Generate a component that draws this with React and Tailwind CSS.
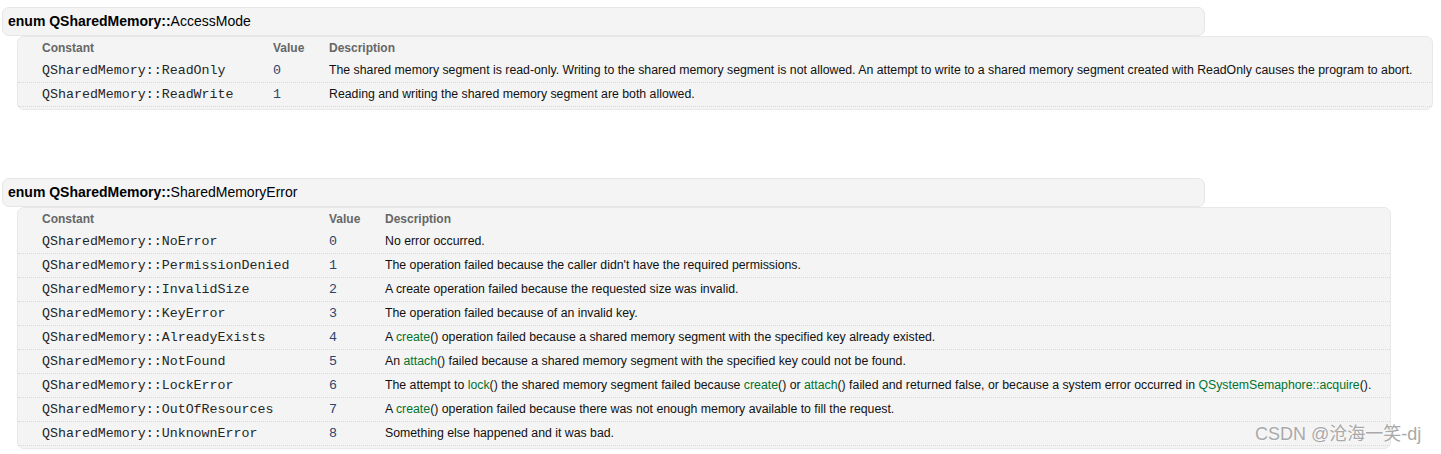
import React from 'react';

const G = ({ children }) => <span className="text-[#00732f]">{children}</span>;

const accessMode = {
    name: 'AccessMode',
    col1: 'w-[255px]',
    rows: [
        ['QSharedMemory::ReadOnly', '0', 'The shared memory segment is read-only. Writing to the shared memory segment is not allowed. An attempt to write to a shared memory segment created with ReadOnly causes the program to abort.'],
        ['QSharedMemory::ReadWrite', '1', 'Reading and writing the shared memory segment are both allowed.'],
    ],
};

const sharedError = {
    name: 'SharedMemoryError',
    col1: 'w-[311px]',
    rows: [
        ['QSharedMemory::NoError', '0', 'No error occurred.'],
        ['QSharedMemory::PermissionDenied', '1', "The operation failed because the caller didn't have the required permissions."],
        ['QSharedMemory::InvalidSize', '2', 'A create operation failed because the requested size was invalid.'],
        ['QSharedMemory::KeyError', '3', 'The operation failed because of an invalid key.'],
        ['QSharedMemory::AlreadyExists', '4', <>A <G>create</G>() operation failed because a shared memory segment with the specified key already existed.</>],
        ['QSharedMemory::NotFound', '5', <>An <G>attach</G>() failed because a shared memory segment with the specified key could not be found.</>],
        ['QSharedMemory::LockError', '6', <>The attempt to <G>lock</G>() the shared memory segment failed because <G>create</G>() or <G>attach</G>() failed and returned false, or because a system error occurred in <G>QSystemSemaphore::acquire</G>().</>],
        ['QSharedMemory::OutOfResources', '7', <>A <G>create</G>() operation failed because there was not enough memory available to fill the request.</>],
        ['QSharedMemory::UnknownError', '8', 'Something else happened and it was bad.'],
    ],
};

const EnumBlock = ({ data }) => (
    <div>
        {/* enum title */}
        <div className="ml-[2px] w-[1203px] h-[29px] flex items-center pl-[5px] rounded-[7px] border border-[#e6e6e6] bg-[#f4f4f4] text-[14px] text-black">
            <span className="font-bold">enum QSharedMemory::</span>
            <span>{data.name}</span>
        </div>

        {/* value list */}
        <div className="ml-[17px] w-fit rounded-[7px] border border-[#e8e8e8] bg-[#f4f4f4] pb-[2px] pr-[19px] text-[12.3px]">
            <div className="flex h-[22px] items-center font-bold text-[#666666] text-[12px]">
                <div className={`${data.col1} shrink-0 pl-[24px]`}>Constant</div>
                <div className="w-[56px] shrink-0">Value</div>
                <div>Description</div>
            </div>
            {data.rows.map((r, i) => (
                <div key={i} className="flex h-[24px] items-center border-b border-dotted border-[#d8d8d8] -mr-[19px] pr-[19px]">
                    <div className={`${data.col1} shrink-0 pl-[24px] font-['Liberation_Mono',monospace] text-[13.3px] text-[#262626]`}>{r[0]}</div>
                    <div className="w-[56px] shrink-0 font-['Liberation_Mono',monospace] text-[13.3px] text-[#2a4470]">{r[1]}</div>
                    <div className="whitespace-nowrap text-[#111111]">{r[2]}</div>
                </div>
            ))}
        </div>
    </div>
);

const App = () => {
    return (
        <div className="relative h-[454px] w-[1441px] overflow-hidden bg-white pt-[7px] font-['Liberation_Sans',Arial,sans-serif]">
            <EnumBlock data={accessMode} />
            <div className="h-[68px]" />
            <EnumBlock data={sharedError} />

            {/* watermark */}
            <div className="absolute left-[1255px] top-[421px] text-[18px] text-[#a9a9a9] font-['Liberation_Sans','Noto_Sans_CJK_SC',sans-serif] [text-shadow:0_0_2px_#ffffff]">
                CSDN @沧海一笑-dj
            </div>
        </div>
    );
};

export default App;
